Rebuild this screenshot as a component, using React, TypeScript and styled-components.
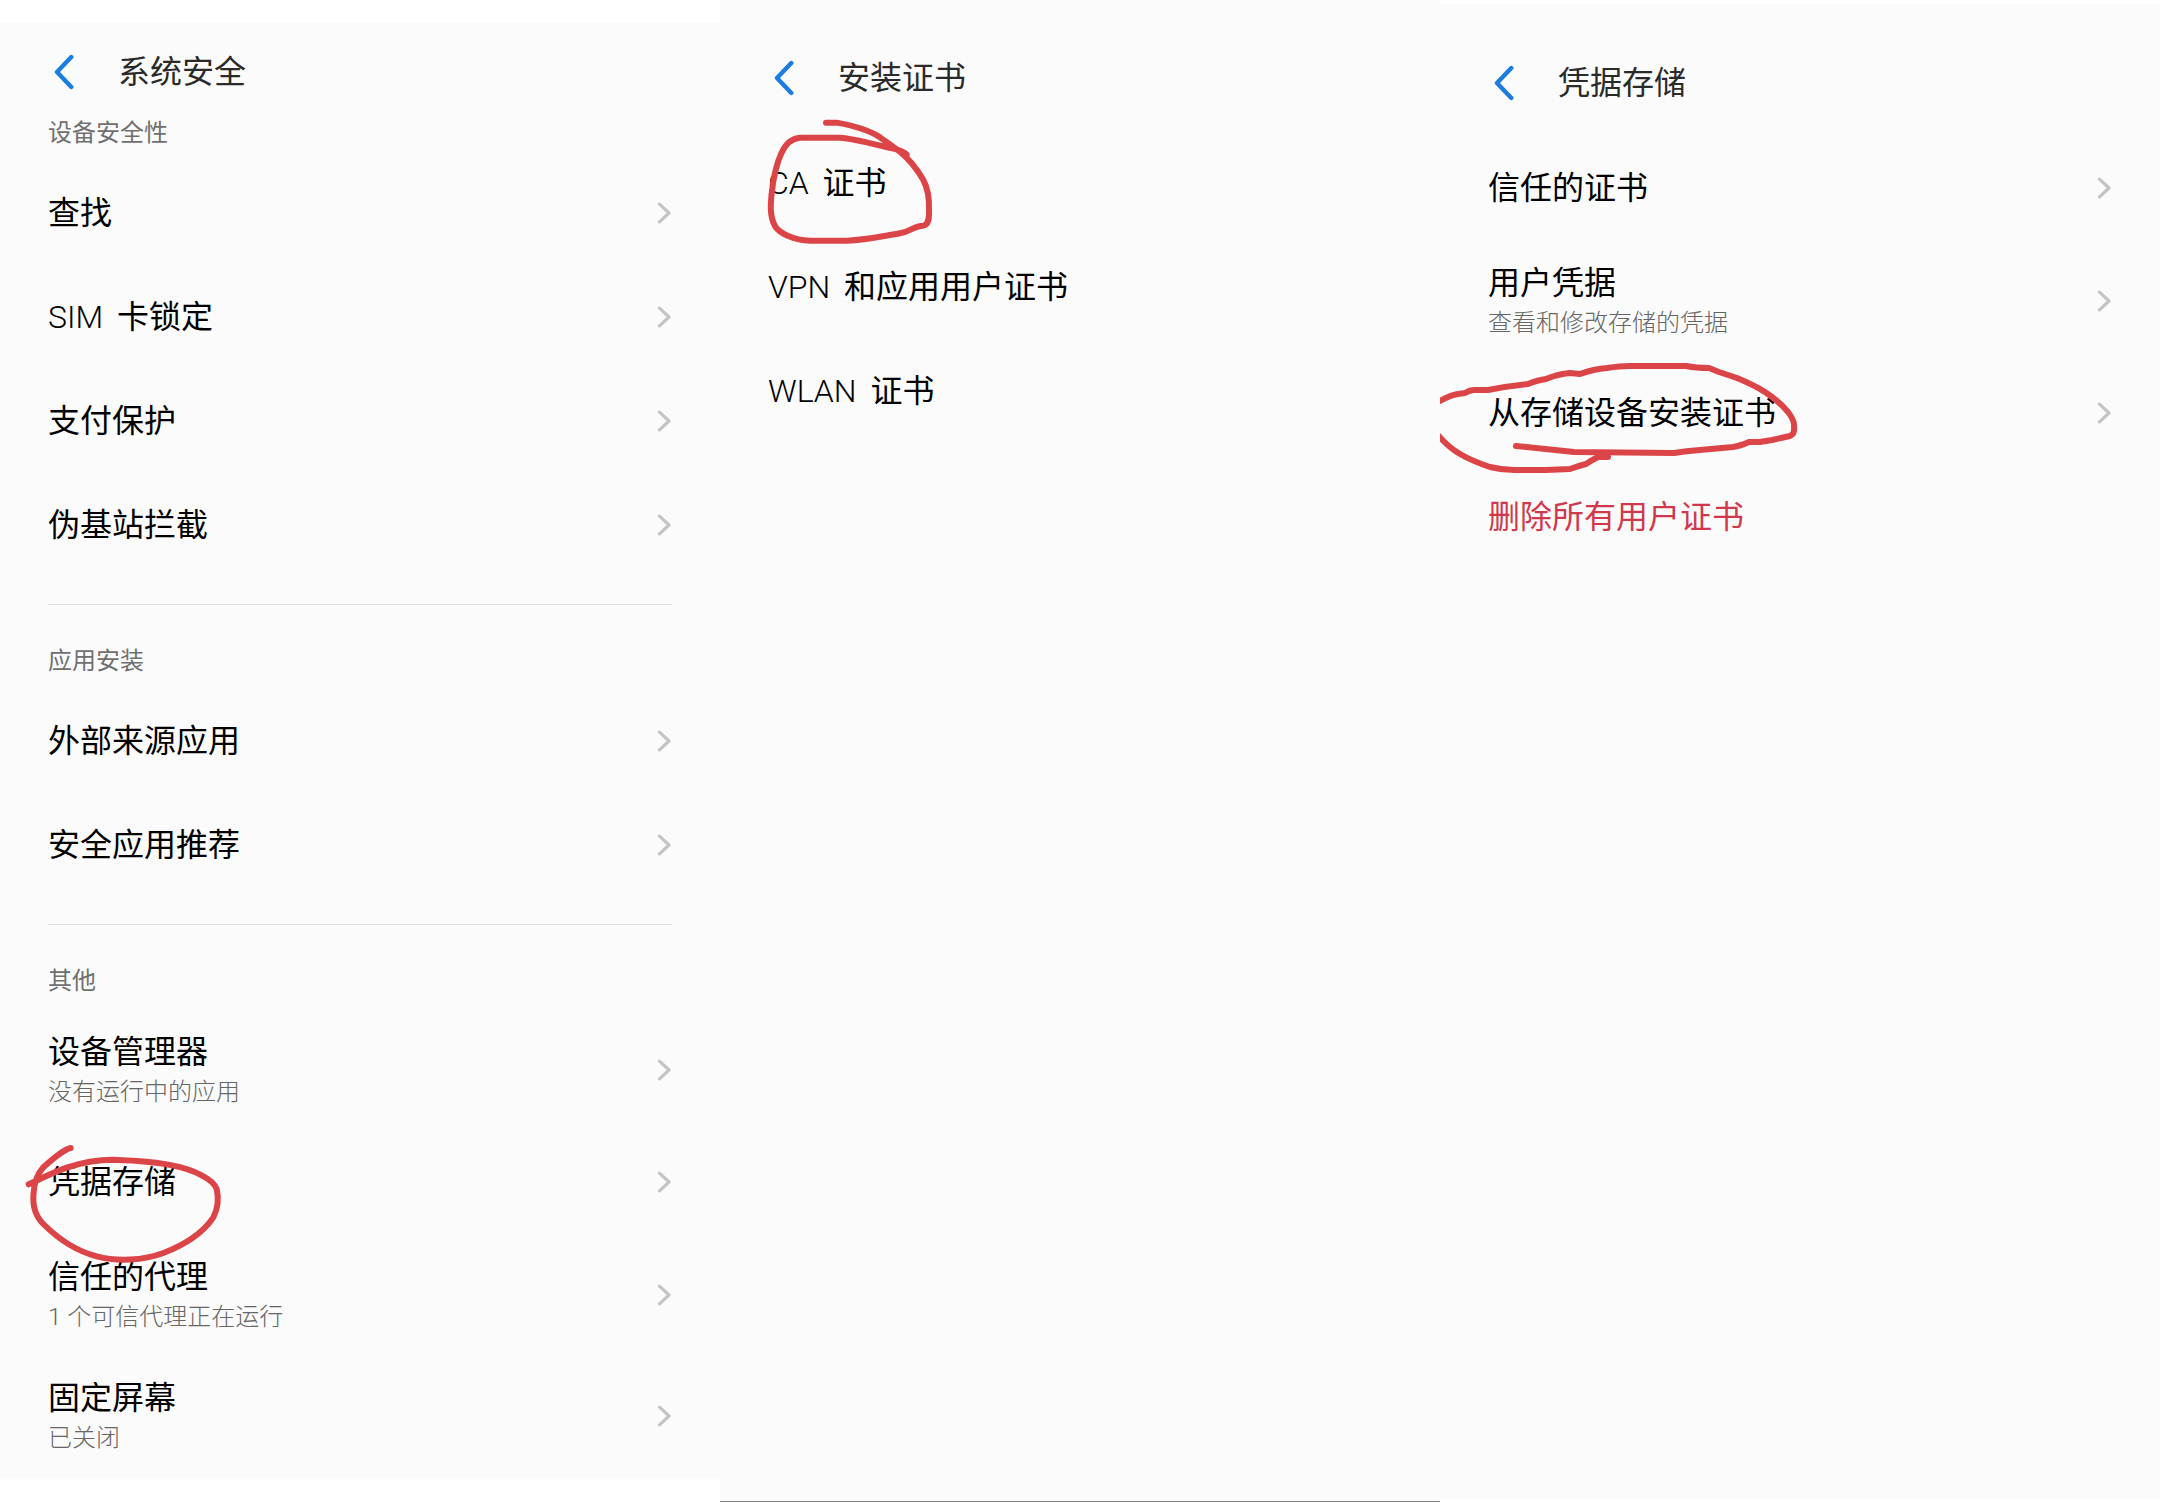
import React from "react";
import styled, { createGlobalStyle, css } from "styled-components";

const GlobalStyle = createGlobalStyle`
  *, *::before, *::after { box-sizing: border-box; }
  body {
    margin: 0;
    background: #fff;
    color: #000;
    font-family: Roboto, "Noto Sans CJK SC", sans-serif;
    font-weight: 400;
  }
`;

const Screens = styled.main`
  display: grid;
  grid-template-columns: repeat(3, minmax(0, 1fr));
  min-height: 100vh;
`;

const Panel = styled.section<{ $top?: number; $bottom?: number; $lead: number; $ruled?: boolean }>`
  margin: ${(p) => p.$top ?? 0}px 0 ${(p) => p.$bottom ?? 0}px;
  padding-top: ${(p) => p.$lead}px;
  background: #fbfbfb;
  ${(p) => p.$ruled && css`border-bottom: 1px solid #808080;`}
`;

const Header = styled.header`
  display: flex;
  align-items: center;
  gap: 44px;
  height: 66px;
  padding: 0 54px;
`;

const BackButton = styled.button`
  display: flex;
  padding: 0;
  border: 0;
  background: none;
  cursor: pointer;
`;

const Title = styled.h1`
  margin: 0;
  color: #2a2a2a;
  font-size: 32px;
  font-weight: 400;
  line-height: 44px;
`;

const GroupLabel = styled.h2`
  margin: 0;
  padding: 0 48px;
  color: #707070;
  font-size: 24px;
  font-weight: 400;
  line-height: 56px;
`;

const Divider = styled.hr`
  height: 1px;
  margin: 27px 48px 28px;
  border: 0;
  background: #dedede;
`;

const List = styled.ul<{ $spaced?: boolean }>`
  margin: ${(p) => (p.$spaced ? 20 : 0)}px 0 0;
  padding: 0;
  list-style: none;
`;

const Item = styled.li`
  position: relative;
`;

const Row = styled.button<{ $tall: boolean; $danger?: boolean }>`
  display: flex;
  align-items: center;
  justify-content: space-between;
  width: 100%;
  min-height: ${(p) => (p.$tall ? 121 : 104)}px;
  padding: 0 48px;
  border: 0;
  background: none;
  color: ${(p) => (p.$danger ? "#d0384c" : "#000")};
  font: inherit;
  text-align: left;
  cursor: pointer;
`;

const RowText = styled.span`
  display: flex;
  flex-direction: column;
`;

const Name = styled.span`
  font-size: 32px;
  line-height: 44px;
`;

const Latin = styled.span`
  margin-right: 6px;
  font-weight: 300;
`;

const Note = styled.span`
  color: #666;
  font-size: 24px;
  font-weight: 300;
  line-height: 36px;
`;

const Ink = styled.svg<{ $left: number; $top: number }>`
  position: absolute;
  left: ${(p) => p.$left}px;
  top: ${(p) => p.$top}px;
  z-index: 1;
  overflow: hidden;
  pointer-events: none;
  fill: none;
  stroke: #dc4548;
  stroke-linecap: round;
  stroke-linejoin: round;
`;

const BackIcon = () => (
  <svg width="20" height="36" viewBox="0 0 20 36" fill="none" aria-hidden="true">
    <path d="M17.3 3 L3 18 L17.3 33" stroke="#1b7ddf" strokeWidth="4.4" strokeLinecap="round" strokeLinejoin="round" />
  </svg>
);

const Chevron = () => (
  <svg width="15" height="22" viewBox="0 0 15 22" fill="none" aria-hidden="true">
    <path d="M2.5 2.2 L12 11 L2.5 19.8" stroke="#c4c4c4" strokeWidth="3.2" strokeLinecap="round" strokeLinejoin="round" />
  </svg>
);

const StorageInk = () => (
  <Ink $left={0} $top={0} width="240" height="149" viewBox="0 3 720 447" strokeWidth="18" aria-hidden="true">
    <path d="M212 57 C188 62 150 97 130 115 C112 135 103 160 101 190 C97 225 105 260 130 285 C170 325 225 365 290 382 C350 398 430 395 490 372 C560 345 610 310 640 265 C655 235 656 205 650 180 C640 150 580 122 520 110 C470 98 400 94 340 92 C290 92 240 102 200 116 C160 130 120 150 86 166" />
  </Ink>
);

const CaInk = () => (
  <Ink $left={20} $top={-31} width="220" height="160" viewBox="0 0 660 480" strokeWidth="18" aria-hidden="true">
    <path d="M258 68 L290 68 C335 76 385 88 420 112 C445 130 465 145 480 155 C510 180 530 205 550 240 C566 270 568 300 567 330 C568 360 564 374 550 377 C520 378 510 396 480 400 C430 408 380 420 320 422 L210 422 C160 420 120 400 106 380 C88 350 92 310 95 280 C100 235 108 195 124 160 C135 135 150 115 180 113 L300 113 C350 116 420 138 460 146 C480 150 492 156 500 164" />
  </Ink>
);

const InstallInk = () => (
  <Ink $left={0} $top={-21} width="380" height="150" viewBox="0 0 380 150" strokeWidth="6" aria-hidden="true">
    <path d="M-4 63 Q10 55 18 54 L25 53 Q30 50 34 50 L48 50 Q68 46 88 44 Q98 40 106 39 Q118 34 130 33 L140 34 Q154 29 167 28 Q180 26 190 26 L246 26 Q256 28 269 28 L279 32 L297 38 Q314 45 325 52 Q339 61 348 72 Q355 81 354 87 Q355 94 350 96 L332 100 L320 102 L309 102 Q300 106 293 107 L260 110 Q246 111 234 113 L134 112 L76 106" />
    <path d="M168 117 L158 117 Q152 120 146 124 Q138 126 130 129 L106 130 L74 130 Q62 130 50 127 Q32 121 20 114 Q8 107 -3 94" />
  </Ink>
);

type Entry = {
  latin?: string;
  name: string;
  note?: string;
  plain?: boolean;
  danger?: boolean;
  ink?: React.ReactNode;
};

const Entries = ({ items, spaced }: { items: Entry[]; spaced?: boolean }) => (
  <List $spaced={spaced}>
    {items.map((item) => (
      <Item key={`${item.latin ?? ""}${item.name}`}>
        <Row type="button" $tall={Boolean(item.note)} $danger={item.danger}>
          <RowText>
            <Name>
              {item.latin && <Latin>{item.latin} </Latin>}
              {item.name}
            </Name>
            {item.note && <Note>{item.note}</Note>}
          </RowText>
          {!item.plain && <Chevron />}
        </Row>
        {item.ink}
      </Item>
    ))}
  </List>
);

const TopBar = ({ title }: { title: string }) => (
  <Header>
    <BackButton type="button" aria-label="返回">
      <BackIcon />
    </BackButton>
    <Title>{title}</Title>
  </Header>
);

const deviceItems: Entry[] = [
  { name: "查找" },
  { latin: "SIM", name: "卡锁定" },
  { name: "支付保护" },
  { name: "伪基站拦截" },
];

const installItems: Entry[] = [{ name: "外部来源应用" }, { name: "安全应用推荐" }];

const otherItems: Entry[] = [
  { name: "设备管理器", note: "没有运行中的应用" },
  { name: "凭据存储", ink: <StorageInk /> },
  { name: "信任的代理", note: "1 个可信代理正在运行" },
  { name: "固定屏幕", note: "已关闭" },
];

const certificateItems: Entry[] = [
  { latin: "CA", name: "证书", plain: true, ink: <CaInk /> },
  { latin: "VPN", name: "和应用用户证书", plain: true },
  { latin: "WLAN", name: "证书", plain: true },
];

const credentialItems: Entry[] = [
  { name: "信任的证书" },
  { name: "用户凭据", note: "查看和修改存储的凭据" },
  { name: "从存储设备安装证书", ink: <InstallInk /> },
  { name: "删除所有用户证书", plain: true, danger: true },
];

export default function App() {
  return (
    <>
      <GlobalStyle />
      <Screens>
        <Panel $top={22} $bottom={23} $lead={17}>
          <TopBar title="系统安全" />
          <GroupLabel>设备安全性</GroupLabel>
          <Entries items={deviceItems} />
          <Divider />
          <GroupLabel>应用安装</GroupLabel>
          <Entries items={installItems} />
          <Divider />
          <GroupLabel>其他</GroupLabel>
          <Entries items={otherItems} />
        </Panel>
        <Panel $lead={45} $ruled>
          <TopBar title="安装证书" />
          <Entries items={certificateItems} spaced />
        </Panel>
        <Panel $top={4} $bottom={3} $lead={46}>
          <TopBar title="凭据存储" />
          <Entries items={credentialItems} spaced />
        </Panel>
      </Screens>
    </>
  );
}
